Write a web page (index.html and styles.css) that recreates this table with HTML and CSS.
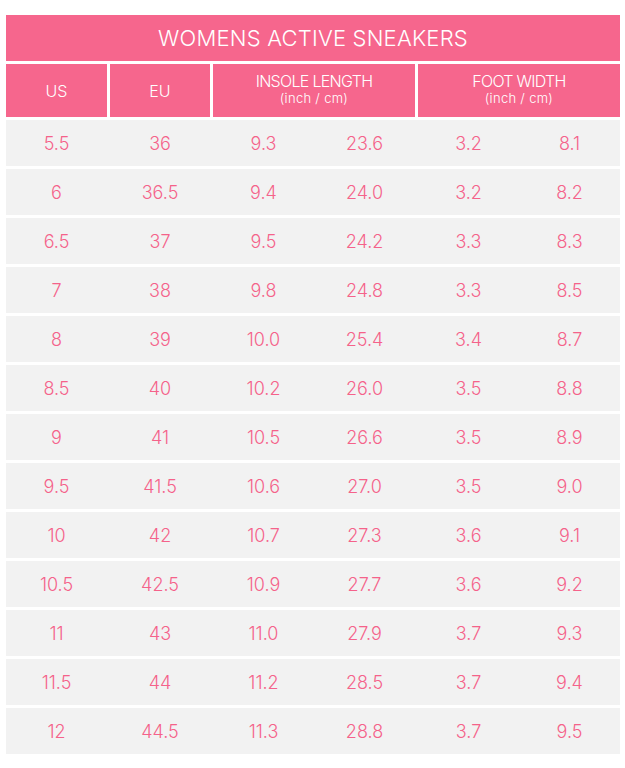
FILE: index.html
```html
<!DOCTYPE html>
<html>
<head>
<meta charset="utf-8">
<link rel="stylesheet" href="styles.css">
</head>
<body>
<div class="chart">
  <div class="title">WOMENS ACTIVE SNEAKERS</div>
  <div class="head">
    <div class="hcell">US</div>
    <div class="hcell">EU</div>
    <div class="hcell"><span class="hmain">INSOLE LENGTH</span><span class="hsub">(inch / cm)</span></div>
    <div class="hcell"><span class="hmain">FOOT WIDTH</span><span class="hsub">(inch / cm)</span></div>
  </div>
  <div class="body" id="rows"></div>
</div>
<script>
var data = [
["5.5","36","9.3","23.6","3.2","8.1"],
["6","36.5","9.4","24.0","3.2","8.2"],
["6.5","37","9.5","24.2","3.3","8.3"],
["7","38","9.8","24.8","3.3","8.5"],
["8","39","10.0","25.4","3.4","8.7"],
["8.5","40","10.2","26.0","3.5","8.8"],
["9","41","10.5","26.6","3.5","8.9"],
["9.5","41.5","10.6","27.0","3.5","9.0"],
["10","42","10.7","27.3","3.6","9.1"],
["10.5","42.5","10.9","27.7","3.6","9.2"],
["11","43","11.0","27.9","3.7","9.3"],
["11.5","44","11.2","28.5","3.7","9.4"],
["12","44.5","11.3","28.8","3.7","9.5"]
];
var html = "";
data.forEach(function(r){
  html += '<div class="row"><div class="cell">'+r[0]+'</div><div class="cell">'+r[1]+'</div>'+
    '<div class="cell pair"><span>'+r[2]+'</span><span>'+r[3]+'</span></div>'+
    '<div class="cell pair"><span>'+r[4]+'</span><span>'+r[5]+'</span></div></div>';
});
document.getElementById("rows").innerHTML = html;
</script>
</body>
</html>
```
FILE: styles.css
```css
html, body {
  margin: 0;
  padding: 0;
  background: #ffffff;
}
body {
  font-family: "Inter", "Lato", sans-serif;
  font-weight: 300;
}
.chart {
  width: 614px;
  margin: 15px 0 0 6px;
  display: flex;
  flex-direction: column;
  gap: 3px;
}
.title {
  height: 46px;
  background: #f6668d;
  color: #ffffff;
  font-size: 22px;
  display: flex;
  align-items: center;
  justify-content: center;
  letter-spacing: 0.2px;
}
.head {
  display: grid;
  grid-template-columns: 101px 100px 202px 202px;
  column-gap: 3px;
}
.hcell {
  height: 53px;
  background: #f6668d;
  color: #ffffff;
  display: flex;
  flex-direction: column;
  align-items: center;
  justify-content: center;
  font-size: 16px;
}
.hmain {
  font-size: 16px;
  line-height: 18px;
  letter-spacing: -0.7px;
  margin-top: -3px;
}
.hsub {
  font-size: 13px;
  line-height: 16px;
  letter-spacing: 0.3px;
}
.body {
  display: flex;
  flex-direction: column;
  gap: 3px;
}
.row {
  display: grid;
  grid-template-columns: 101px 100px 202px 202px;
  column-gap: 3px;
  background: #f2f2f2;
  height: 46px;
}
.cell {
  display: flex;
  align-items: center;
  justify-content: center;
  color: #f5628a;
  font-size: 18px;
}
.pair span {
  flex: 1;
  text-align: center;
}
```
